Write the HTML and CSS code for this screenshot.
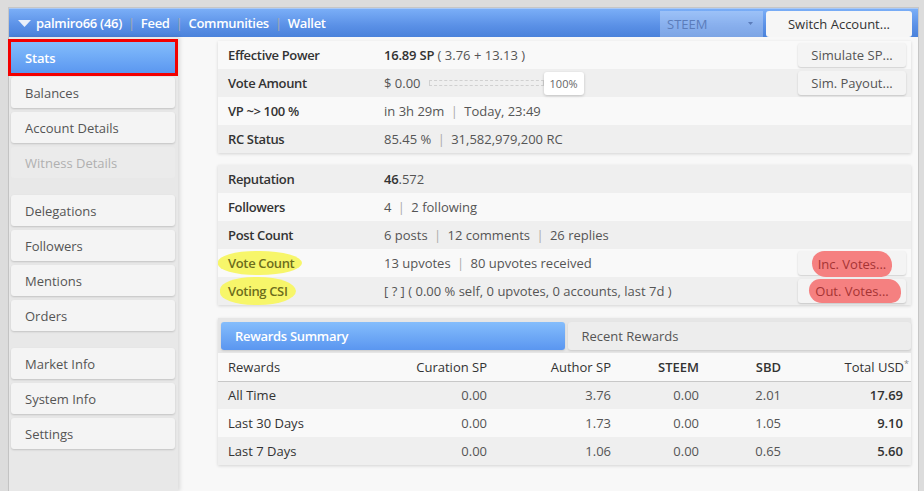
FILE: index.html
```html
<!DOCTYPE html>
<html lang="en">
  <head>
    <meta charset="UTF-8" />
    <meta name="viewport" content="width=device-width, initial-scale=1.0" />
    <title>Stats - palmiro66</title>
    <link rel="stylesheet" href="styles.css">
  </head>
  <body>
    <div class="app">
      <header class="topbar">
        <div class="nav">
          <svg class="nav-caret" width="13" height="7" viewBox="0 0 13 7"><path d="M0 0 H13 L6.5 7 Z" fill="#e9effa"/></svg>
          <span>palmiro66 (46)</span>
          <span class="sep">|</span>
          <span>Feed</span>
          <span class="sep">|</span>
          <span>Communities</span>
          <span class="sep">|</span>
          <span>Wallet</span>
        </div>
        <div class="chain-select">
          STEEM
          <svg width="5" height="3" viewBox="0 0 5 3"><path d="M0 0 H5 L2.5 3 Z" fill="#5b7cba"/></svg>
        </div>
        <button class="switch-btn">Switch Account...</button>
      </header>

      <div class="layout">
        <aside class="sidebar">
          <div class="menu-group">
            <div class="menu-item active">Stats</div>
            <div class="menu-item">Balances</div>
            <div class="menu-item">Account Details</div>
            <div class="menu-item disabled">Witness Details</div>
          </div>
          <div class="menu-group">
            <div class="menu-item">Delegations</div>
            <div class="menu-item">Followers</div>
            <div class="menu-item">Mentions</div>
            <div class="menu-item">Orders</div>
          </div>
          <div class="menu-group">
            <div class="menu-item">Market Info</div>
            <div class="menu-item">System Info</div>
            <div class="menu-item">Settings</div>
          </div>
        </aside>

        <main class="content">
          <section class="panel">
            <div class="row">
              <div class="label">Effective Power</div>
              <div class="value"><b>16.89 SP</b> ( 3.76 + 13.13 )</div>
              <button class="btn">Simulate SP...</button>
            </div>
            <div class="row alt">
              <div class="label">Vote Amount</div>
              <div class="value vote-amount">
                $ 0.00
                <span class="track"></span>
                <span class="knob">100%</span>
              </div>
              <button class="btn">Sim. Payout...</button>
            </div>
            <div class="row">
              <div class="label">VP ~&gt; 100 %</div>
              <div class="value">in 3h 29m <span class="sep">|</span> Today, 23:49</div>
            </div>
            <div class="row alt">
              <div class="label">RC Status</div>
              <div class="value">85.45 % <span class="sep">|</span> 31,582,979,200 RC</div>
            </div>
          </section>

          <section class="panel">
            <div class="row alt">
              <div class="label">Reputation</div>
              <div class="value"><b>46</b>.572</div>
            </div>
            <div class="row">
              <div class="label">Followers</div>
              <div class="value">4 <span class="sep">|</span> 2 following</div>
            </div>
            <div class="row alt">
              <div class="label">Post Count</div>
              <div class="value">6 posts <span class="sep">|</span> 12 comments <span class="sep">|</span> 26 replies</div>
            </div>
            <div class="row">
              <div class="label"><span class="mark-yellow">Vote Count</span></div>
              <div class="value">13 upvotes <span class="sep">|</span> 80 upvotes received</div>
              <button class="btn"><span class="mark-red">Inc. Votes...</span></button>
            </div>
            <div class="row alt">
              <div class="label"><span class="mark-yellow csi">Voting CSI</span></div>
              <div class="value">[ ? ] ( 0.00 % self, 0 upvotes, 0 accounts, last 7d )</div>
              <button class="btn"><span class="mark-red wide">Out. Votes...</span></button>
            </div>
          </section>

          <section class="panel rewards">
            <div class="tabs">
              <div class="tab active">Rewards Summary</div>
              <div class="tab">Recent Rewards</div>
            </div>
            <table class="rewards-table">
              <colgroup>
                <col style="width:182px">
                <col style="width:95px">
                <col style="width:124px">
                <col style="width:88px">
                <col style="width:82px">
                <col style="width:122px">
              </colgroup>
              <thead>
                <tr>
                  <th>Rewards</th>
                  <th>Curation SP</th>
                  <th>Author SP</th>
                  <th class="strong">STEEM</th>
                  <th class="strong">SBD</th>
                  <th>Total USD<sup>*</sup></th>
                </tr>
              </thead>
              <tbody>
                <tr class="alt">
                  <td>All Time</td><td>0.00</td><td>3.76</td><td>0.00</td><td>2.01</td><td class="total">17.69</td>
                </tr>
                <tr>
                  <td>Last 30 Days</td><td>0.00</td><td>1.73</td><td>0.00</td><td>1.05</td><td class="total">9.10</td>
                </tr>
                <tr class="alt">
                  <td>Last 7 Days</td><td>0.00</td><td>1.06</td><td>0.00</td><td>0.65</td><td class="total">5.60</td>
                </tr>
              </tbody>
            </table>
          </section>
        </main>
      </div>
    </div>
  </body>
</html>
```

FILE: styles.css
```css
* {
  box-sizing: border-box;
}
html, body {
  height: 100%;
}
body {
  margin: 0;
  background-color: #dcdcdc;
  font-family: "Open Sans", Arial, sans-serif;
  font-size: 13px;
  color: #555;
  overflow: hidden;
}
button {
  font-family: inherit;
}
.app {
  margin: 7px 5px 0 8px;
  height: calc(100% - 7px);
  border: 1px solid #c6c6c6;
  border-bottom: none;
  background-color: #f8f8f8;
  display: flex;
  flex-direction: column;
}

/* top navigation */
.topbar {
  height: 29px;
  flex-shrink: 0;
  display: flex;
  align-items: center;
  padding: 0 6px 0 9px;
  background: linear-gradient(#7aaef7, #5a90e6 60%, #4a82db);
  border-top: 1px solid #a9c9f7;
}
.nav {
  flex: 1;
  display: flex;
  align-items: center;
  gap: 6px;
  color: #fff;
  font-size: 13px;
  font-weight: 600;
  letter-spacing: -0.3px;
}
.nav-caret {
  margin-right: -1px;
}
.nav .sep {
  font-weight: 400;
  padding: 0;
}
.chain-select {
  width: 103px;
  height: 26px;
  margin-top: 1px;
  display: flex;
  align-items: center;
  justify-content: space-between;
  padding: 0 10px 0 7px;
  background-color: rgba(255, 255, 255, 0.28);
  color: #5b7cba;
  font-size: 13px;
}
.switch-btn {
  width: 146px;
  height: 26px;
  margin-left: 3px;
  margin-top: 1px;
  border: none;
  border-radius: 3px;
  background-color: #f6f6f6;
  color: #333;
  font-size: 13px;
}

.layout {
  flex: 1;
  display: flex;
  min-height: 0;
}

/* side menu */
.sidebar {
  width: 169px;
  flex-shrink: 0;
  padding: 5px 3px 0 2px;
  background-color: #e8e8e8;
  box-shadow: 2px 0 4px rgba(0, 0, 0, 0.12);
  display: flex;
  flex-direction: column;
  gap: 17px;
}
.menu-group {
  display: flex;
  flex-direction: column;
  gap: 4px;
}
.menu-item {
  height: 31px;
  display: flex;
  align-items: center;
  padding-left: 14px;
  background-color: #f4f4f4;
  border-radius: 3px;
  box-shadow: 0 1px 2px rgba(0, 0, 0, 0.16);
  color: #555;
}
.menu-item.active {
  background: linear-gradient(#83bdfc, #5b97f0);
  border-radius: 0;
  color: #fff;
  font-weight: 600;
  letter-spacing: -0.2px;
  outline: 3px solid #f20000;
  outline-offset: 0;
}
.menu-item.disabled {
  background-color: #ebebeb;
  box-shadow: none;
  color: #b0b0b0;
}

/* main area */
.content {
  flex: 1;
  padding: 4px 7px 0 40px;
  display: flex;
  flex-direction: column;
  gap: 12px;
}
.panel {
  background-color: #f9f9f9;
  box-shadow: 0 1px 3px rgba(0, 0, 0, 0.15);
}
.row {
  min-height: 28px;
  display: grid;
  grid-template-columns: 156px 1fr auto;
  align-items: center;
  padding: 0 5px 0 10px;
  background-color: #f9f9f9;
}
.row.alt {
  background-color: #efefef;
}
.label {
  color: #333;
  font-weight: 600;
  letter-spacing: -0.35px;
}
.value b {
  color: #333;
  font-weight: 600;
  letter-spacing: -0.2px;
}
.sep {
  color: #aaa;
  padding: 0 3px;
}
.btn {
  width: 108px;
  height: 24px;
  margin: 2px 0;
  border: none;
  border-radius: 3px;
  background-color: #f4f4f4;
  box-shadow: 0 1px 2px rgba(0, 0, 0, 0.18);
  color: #555;
  font-size: 13px;
  padding: 0;
}

.vote-amount {
  display: flex;
  align-items: center;
}
.track {
  width: 115px;
  height: 6px;
  margin-left: 8px;
  border: 1px dashed #d0d0d0;
}
.knob {
  width: 40px;
  height: 23px;
  display: flex;
  align-items: center;
  justify-content: center;
  background-color: #fff;
  border-radius: 3px;
  box-shadow: 0 1px 3px rgba(0, 0, 0, 0.2);
  font-size: 11px;
  color: #666;
}

/* hand drawn markers */
.mark-yellow {
  display: inline-block;
  margin-left: -10px;
  padding: 3px 8px 3px 10px;
  background-color: #f7f66a;
  border-radius: 45% 50% 50% 45%;
  color: #6d6d1c;
}
.mark-yellow.csi {
  margin-left: -8px;
  padding: 5px 8px 5px 8px;
}
.mark-red {
  display: inline-block;
  padding: 4px 6px;
  background-color: #f58080;
  border-radius: 14px 16px 12px 16px;
  color: #a63434;
}
.mark-red.wide {
  padding: 3px 12px 3px 6px;
  margin-right: -6px;
}

/* rewards */
.rewards {
  margin-top: 1px;
}
.tabs {
  display: flex;
  gap: 3px;
  padding: 4px 0 3px 3px;
  background-color: #e6e6e6;
}
.tab {
  flex: 1;
  height: 28px;
  display: flex;
  align-items: center;
  padding-left: 14px;
  background-color: #ededed;
  border-radius: 3px;
  box-shadow: 0 1px 2px rgba(0, 0, 0, 0.12);
  color: #555;
}
.tab.active {
  background: linear-gradient(#84bdfc, #5a96f0);
  color: #fff;
  font-weight: 600;
  letter-spacing: -0.3px;
}
.rewards-table {
  width: 100%;
  border-collapse: collapse;
  table-layout: fixed;
}
.rewards-table th,
.rewards-table td {
  height: 28px;
  padding: 0 8px 0 10px;
  text-align: right;
  white-space: nowrap;
}
.rewards-table th {
  color: #333;
  font-weight: 400;
  background-color: #f9f9f9;
  border-bottom: 1px solid #c8c8c8;
}
.rewards-table th.strong {
  font-weight: 600;
}
.rewards-table th:first-child,
.rewards-table td:first-child {
  text-align: left;
  color: #333;
}
.rewards-table sup {
  font-size: 9px;
  color: #888;
  margin-right: -6px;
}
.rewards-table tr.alt td {
  background-color: #efefef;
}
.rewards-table td.total {
  color: #333;
  font-weight: 600;
}
```
